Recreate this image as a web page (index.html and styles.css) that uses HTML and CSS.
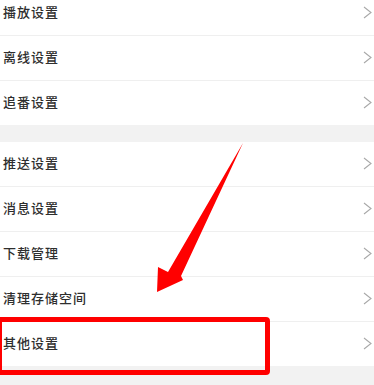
FILE: index.html
```html
<!DOCTYPE html>
<html lang="zh-CN">
<head>
<meta charset="utf-8">
<title>设置</title>
<link rel="stylesheet" href="styles.css">
</head>
<body>
<div class="page">
  <div class="group first">
    <div class="row"><span class="label">播放设置</span><svg class="chev" viewBox="0 0 9 13"><polyline points="1,1 8,6.5 1,12"/></svg></div>
    <div class="row"><span class="label">离线设置</span><svg class="chev" viewBox="0 0 9 13"><polyline points="1,1 8,6.5 1,12"/></svg></div>
    <div class="row"><span class="label">追番设置</span><svg class="chev" viewBox="0 0 9 13"><polyline points="1,1 8,6.5 1,12"/></svg></div>
  </div>
  <div class="gap"></div>
  <div class="group">
    <div class="row"><span class="label">推送设置</span><svg class="chev" viewBox="0 0 9 13"><polyline points="1,1 8,6.5 1,12"/></svg></div>
    <div class="row"><span class="label">消息设置</span><svg class="chev" viewBox="0 0 9 13"><polyline points="1,1 8,6.5 1,12"/></svg></div>
    <div class="row"><span class="label">下载管理</span><svg class="chev" viewBox="0 0 9 13"><polyline points="1,1 8,6.5 1,12"/></svg></div>
    <div class="row"><span class="label">清理存储空间</span><svg class="chev" viewBox="0 0 9 13"><polyline points="1,1 8,6.5 1,12"/></svg></div>
    <div class="row"><span class="label">其他设置</span><svg class="chev" viewBox="0 0 9 13"><polyline points="1,1 8,6.5 1,12"/></svg></div>
  </div>
  <div class="rest"></div>

  <div class="highlight"></div>
  <svg class="arrow" viewBox="0 0 374 385" width="374" height="385">
    <polygon points="243,143 181,276 183,280 157,292 158,267 168,272"/>
  </svg>
</div>
</body>
</html>
```
FILE: styles.css
```css
html, body {
  margin: 0;
  padding: 0;
  background: #ffffff;
}
body {
  font-family: "Noto Sans CJK SC", "Noto Sans", sans-serif;
  overflow: hidden;
}
.page {
  position: relative;
  width: 374px;
  height: 385px;
  overflow: hidden;
  background: #f2f2f2;
}
.group {
  display: flex;
  flex-direction: column;
  background: #ffffff;
}
.group.first {
  margin-top: -9px;
}
.row {
  height: 44px;
  box-sizing: border-box;
  display: flex;
  align-items: center;
  justify-content: space-between;
  padding: 0 2px 3px 3px;
  border-bottom: 1px solid #efefef;
}
.row:last-child {
  height: 44px;
  border-bottom: none;
}
.row:not(:last-child) {
  height: 45px;
}
.label {
  font-size: 13px;
  letter-spacing: 1px;
  color: #2e2e2e;
  font-weight: 500;
}
.chev {
  width: 9px;
  height: 13px;
  margin-top: 2px;
  fill: none;
  stroke: #a8a8a8;
  stroke-width: 1.1;
}
.gap {
  height: 17px;
  background: #f2f2f2;
}
.rest {
  height: 20px;
  background: #f2f2f2;
}
.highlight {
  position: absolute;
  left: -3px;
  top: 317px;
  width: 263px;
  height: 48px;
  border: 5px solid #ff0000;
  border-radius: 4px;
}
.arrow {
  position: absolute;
  left: 0;
  top: 0;
}
.arrow polygon {
  fill: #ff0000;
}
```
